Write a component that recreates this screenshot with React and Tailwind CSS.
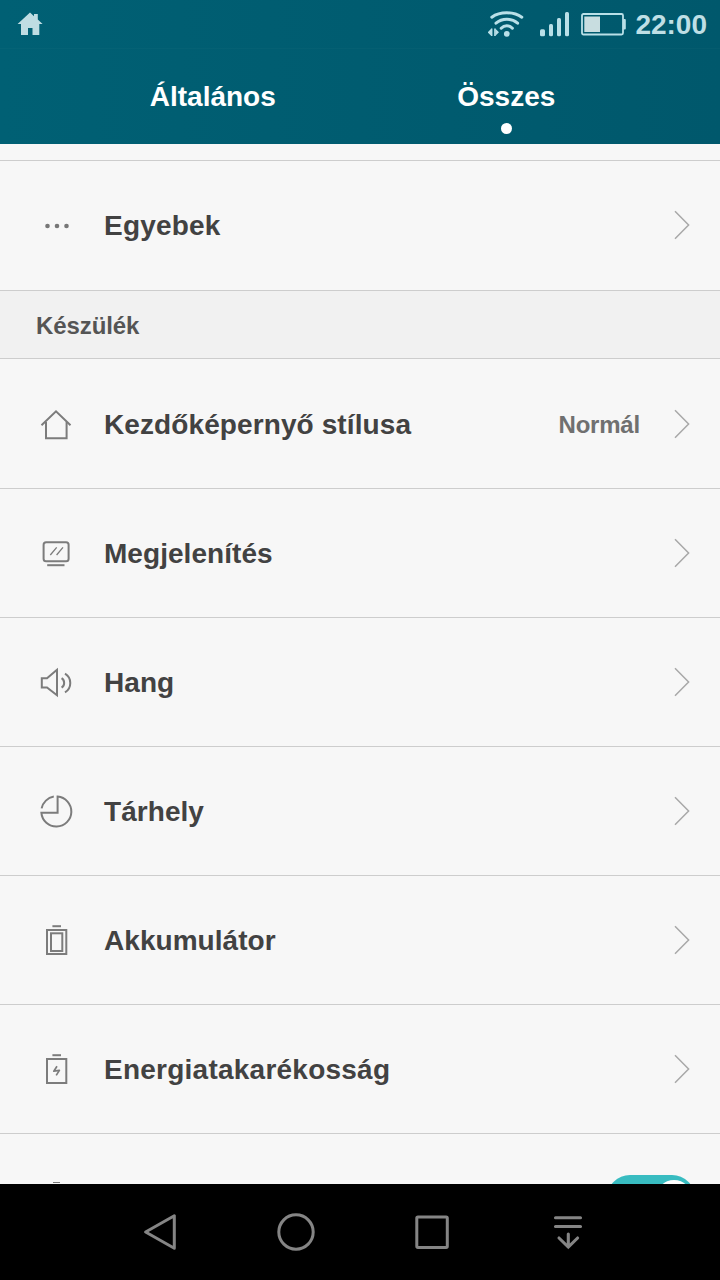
import { clsx } from 'clsx';

const HomeIcon = () => (
    <>
        <path d="M5.5 21.2 20 7.4 34.5 21.2" />
        <path d="M10 18V34.2H30.6V18" />
    </>
);

const DisplayIcon = () => (
    <>
        <rect x="7.6" y="9.2" width="25" height="19" rx="2.5" />
        <path d="M11.2 32.2h17.3" />
        <path d="m14.3 22 6.4-7.6M20.6 22l6.4-7.6" strokeWidth="1.3" />
    </>
);

const SoundIcon = () => (
    <>
        <path d="M21 7.8 11 16.3H5.8V25.4H11L21 33.2Z" />
        <path d="M25.6 16.2a5.6 5.6 0 0 1 0 9.4" />
        <path d="M29 11.6a11 11 0 0 1 0 18.8" />
    </>
);

const StorageIcon = () => (
    <>
        <path d="M21.6 5.6V21.8H5.4A15 15 0 1 0 21.6 5.6Z" />
        <path d="M5.6 17.4A15 15 0 0 1 17.8 5.6" />
    </>
);

const BatteryIcon = () => (
    <>
        <path d="M16.4 6.2H25" />
        <rect x="11" y="10" width="19.3" height="24" />
        <rect x="15" y="13.3" width="11.3" height="17.7" />
    </>
);

const PowerSaveIcon = () => (
    <>
        <path d="M16.4 6.2H25" />
        <rect x="11" y="10" width="19.3" height="24" />
        <path d="M21 17.2 17.8 22.2 23.4 21.4 20.2 26.4" strokeWidth="1.7" strokeLinejoin="round" />
    </>
);

const MoreIcon = () => (
    <g fill="#777" stroke="none">
        <circle cx="11.5" cy="21" r="2.3" />
        <circle cx="21" cy="21" r="2.3" />
        <circle cx="30.5" cy="21" r="2.3" />
    </g>
);

const deviceItems = [
    { label: 'Kezdőképernyő stílusa', value: 'Normál', icon: HomeIcon, className: 'h-[130px] pt-px tracking-[0.1px]' },
    { label: 'Megjelenítés', icon: DisplayIcon },
    { label: 'Hang', icon: SoundIcon },
    { label: 'Tárhely', icon: StorageIcon },
    { label: 'Akkumulátor', icon: BatteryIcon },
    { label: 'Energiatakarékosság', icon: PowerSaveIcon, className: 'h-[129px] tracking-[0.24px]' },
];

function Row({ label, value, icon: Icon, className = 'h-[129px] tracking-[0.05px]' }) {
    return (
        <li className={clsx('flex shrink-0 items-center border-b border-[#cdcdcd] pl-9 pr-[29px]', className)}>
            <svg className="size-10 shrink-0" viewBox="0 0 40 40" fill="none" stroke="#7c7c7c" strokeWidth="2">
                <Icon />
            </svg>
            <span className="ml-7 flex-1 pt-0.5 text-[28px] leading-8 font-bold text-[#424242]">{label}</span>
            {value && <span className="mr-[34px] pt-0.5 text-2xl font-bold tracking-[-0.2px] text-[#707070]">{value}</span>}
            <svg className="h-8 w-[17px]" viewBox="0 0 17 32" fill="none" stroke="#a8a8a8" strokeWidth="1.5">
                <path d="M1 2.2 14.6 16 1 29.8" />
            </svg>
        </li>
    );
}

function StatusBar() {
    return (
        <div className="flex h-12 items-center justify-between pl-[17px] pr-[13px] text-[#b9e0e8]">
            <svg className="h-6 w-[26px]" viewBox="0 0 26 24" fill="#bfdde3">
                <path d="M13 .6 17 4.2V2H20.8V7.6L25.6 12H22.3V23H15.5V16H11V23H4V12H.6Z" />
            </svg>
            <div className="flex items-center">
                <svg className="h-8 w-[38px]" viewBox="0 0 38 32" fill="none" stroke="currentColor" strokeWidth="3" strokeLinecap="round">
                    <path d="M3.8 9.2C12 3.4 25.6 3.4 33.8 9.2" />
                    <path d="M8 15.2c6-5.2 15.6-5.2 21.6 0" />
                    <path d="M13.2 20.2c3.2-3.4 8-3.4 11.2 0" />
                    <circle cx="18.8" cy="25.8" r="2.9" fill="currentColor" stroke="none" />
                    <path d="M-.4 24.3 3.4 20.6V28ZM11 24.3 7.2 20.6V28Z" fill="currentColor" stroke="none" />
                    <path d="M3.7 20.6V28M6.9 20.6V28" strokeWidth="1.5" strokeLinecap="butt" />
                </svg>
                <svg className="ml-3.5 h-8 w-[30px]" viewBox="0 0 30 32" fill="currentColor">
                    <rect x="0" y="21.3" width="5" height="7" rx="1.5" />
                    <rect x="9" y="16" width="4" height="12.3" rx="1.5" />
                    <rect x="17" y="10" width="4" height="18.3" rx="1.5" />
                    <rect x="25" y="4" width="4" height="24.3" rx="1.5" />
                </svg>
                <svg className="ml-[11px] h-8 w-[46px]" viewBox="0 0 46 32">
                    <rect x="1" y="6" width="41" height="20.5" rx="1.5" fill="none" stroke="currentColor" strokeWidth="1.8" />
                    <rect x="42" y="11" width="2.8" height="10.5" rx="1" fill="currentColor" />
                    <rect x="3.3" y="8.5" width="15.7" height="15.5" fill="#c8dde0" />
                </svg>
                <span className="ml-2 pt-px text-[28px] leading-8 font-bold text-[#bfdfe5]">22:00</span>
            </div>
        </div>
    );
}

function NavBar() {
    return (
        <nav className="grid h-24 shrink-0 grid-cols-4 place-items-center bg-black pl-[92px] pr-[84px]">
            <svg className="size-10" viewBox="0 0 40 40" fill="none" stroke="#858585" strokeWidth="3" strokeLinejoin="round">
                <path d="M34.3 3.7V36.3L5.6 20Z" />
            </svg>
            <svg className="size-10" viewBox="0 0 40 40" fill="none" stroke="#858585" strokeWidth="3">
                <circle cx="20" cy="20" r="17.2" />
            </svg>
            <svg className="size-10" viewBox="0 0 40 40" fill="none" stroke="#858585" strokeWidth="3">
                <rect x="4.8" y="4.9" width="30.5" height="30.5" rx="1.2" />
            </svg>
            <svg className="size-10" viewBox="0 0 40 40" fill="none" stroke="#858585" strokeWidth="3.1" strokeLinecap="round">
                <path d="M7.5 5.7h25M7.5 14.500h25M20.3 22v13M11 26l9.3 9 9.3-9" />
            </svg>
        </nav>
    );
}

export default function App() {
    return (
        <div className="flex h-[1280px] w-[720px] flex-col overflow-hidden bg-[#f7f7f7] font-['Liberation_Sans',Arial,sans-serif]">
            <header className="h-36 shrink-0 bg-linear-to-r from-[#006074] to-[#00586c]">
                <StatusBar />
                <div className="grid h-24 grid-cols-2 border-t border-white/2 pl-[66px] pr-[67px] pt-8 text-center text-[28px] leading-8 font-bold text-white">
                    <div>Általános</div>
                    <div className="flex flex-col items-center gap-2.5">
                        <span>Összes</span>
                        <span className="size-[11px] rounded-full bg-white" />
                    </div>
                </div>
            </header>

            <main className="flex min-h-0 flex-1 flex-col overflow-hidden">
                <div className="h-[17px] shrink-0 border-b border-[#cdcdcd]" />
                <ul>
                    <Row label="Egyebek" icon={MoreIcon} className="h-[130px] pb-px tracking-[0.2px]" />
                </ul>
                <h2 className="flex h-[68px] shrink-0 items-center border-b border-[#cdcdcd] bg-[#f1f1f1] pl-9 pt-[3px] text-2xl font-bold tracking-[-0.1px] text-[#555]">
                    Készülék
                </h2>
                <ul>
                    {deviceItems.map((item) => (
                        <Row key={item.label} {...item} />
                    ))}
                </ul>

                {/* Next row, cut off by the navigation bar */}
                <div className="flex h-[129px] shrink-0 items-start justify-between pl-[53px] pr-[25px] pt-[41px]">
                    <span className="mt-[7px] h-px w-[7px] bg-[#777]" />
                    <span className="flex h-[46px] w-[88px] items-center justify-end rounded-full bg-[#38bcc1] pr-[3px]">
                        <span className="size-9 rounded-full bg-white" />
                    </span>
                </div>
            </main>

            <NavBar />
        </div>
    );
}
